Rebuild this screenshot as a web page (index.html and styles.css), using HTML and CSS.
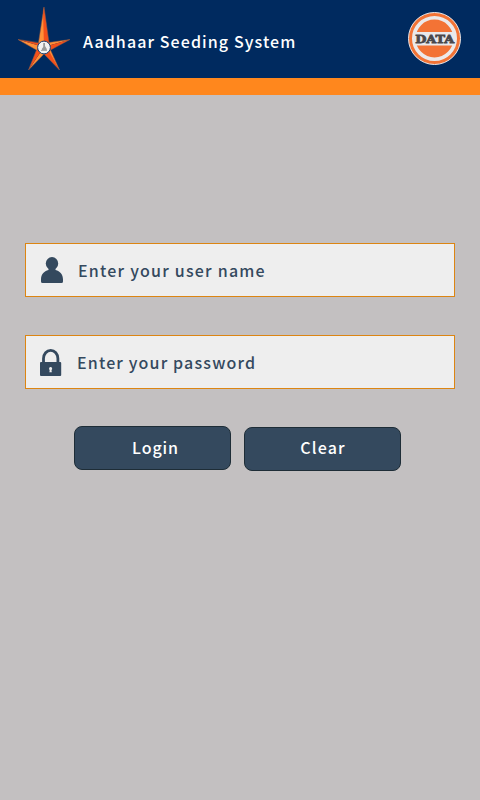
FILE: index.html
```html
<!DOCTYPE html>
<html lang="en">
<head>
<meta charset="utf-8">
<title>Aadhaar Seeding System</title>
<link rel="stylesheet" href="styles.css">
</head>
<body>
<header class="header">
  <svg class="star" viewBox="0 0 56 68" width="56" height="68">
    <g fill="#ff9138">
      <path d="M28 2 22.500 38 28 42z"/>
      <path d="M54 34.500 33 37.500 28 42z"/>
      <path d="M43.500 65 34.500 45 28 42z"/>
      <path d="M12.500 65 28 49 28 42z"/>
      <path d="M2 34.500 20.500 45 28 42z"/>
    </g>
    <g fill="#f4501a">
      <path d="M27 7 28 2 33 38 28 42z"/>
      <path d="M54 34.500 34.500 45 28 42z"/>
      <path d="M43.500 65 28 49 28 42 33 46z"/>
      <path d="M12.500 65 20.500 45 28 42z"/>
      <path d="M2 34.500 22.500 38 28 42z"/>
    </g>
    <path d="M28 2 33 37.500 54 34.500 34.500 45 43.500 65 28 49 12.500 65 20.500 45 2 34.500 22.500 37.500z" fill="none" stroke="#9a5a40" stroke-width=".5"/>
    <circle cx="28" cy="42.500" r="6.400" fill="#f2f2f2" stroke="#173c70" stroke-width="1"/>
    <path d="M27.200 38h1.800v3l1.800 3v2h-5v-2l1.400-2z" fill="#999"/>
    <path d="M25 45.500h6" stroke="#aaa"/>
  </svg>
  <h1 class="title">Aadhaar Seeding System</h1>
  <svg class="logo" viewBox="0 0 54 54" width="54" height="54">
    <circle cx="26.500" cy="26.500" r="26" fill="#f37335" stroke="#e9e7ea" stroke-width="1"/>
    <circle cx="26.500" cy="26.500" r="20.700" fill="none" stroke="#ece9e9" stroke-width="3.600"/>
    <path d="M6 20h41v13.500H6z" fill="#e9e9eb"/>
    <text x="26.700" y="30.600" text-anchor="middle" textLength="39" lengthAdjust="spacingAndGlyphs" class="logo-text">DATA</text>
  </svg>
</header>
<main class="content">
  <form class="form">
    <div class="field">
      <svg class="icon" viewBox="0 0 24 28" width="24" height="28">
        <ellipse cx="12" cy="7.500" rx="6.200" ry="6.400"/>
        <path d="M8.500 10h7v4c4.500 1 7.500 4.500 7.500 9.500v2q0 1.500-1.500 1.500h-19Q1 27 1 25.500v-2C1 18.500 4 15 8.500 14z"/>
      </svg>
      <span class="hint user">Enter your user name</span>
    </div>
    <div class="field">
      <svg class="icon" viewBox="0 0 24 28" width="24" height="28">
        <path d="M3.500 15V10.500a7.200 8.200 0 0 1 14.400 0V15" fill="none" stroke="#34495e" stroke-width="2.800"/>
        <rect x="0" y="14" width="21.200" height="14" rx="1"/>
        <path d="M10.600 19a1.600 1.600 0 0 1 .9 2.900l.3 2.400H9.400l.3-2.400a1.600 1.600 0 0 1 .9-2.900z" fill="#eee"/>
      </svg>
      <span class="hint pass">Enter your password</span>
    </div>
    <div class="actions">
      <button class="button login" type="button">Login</button>
      <button class="button clear" type="button">Clear</button>
    </div>
  </form>
</main>
</body>
</html>
```
FILE: styles.css
```css
* { box-sizing: border-box; }
body {
  margin: 0;
  min-height: 800px;
  background: #c3c0c1;
  font-family: "Noto Sans CJK SC", "Lato", sans-serif;
}
.header {
  display: flex;
  height: 95px;
  background: #002a5f;
  border-bottom: 17px solid #ff871d;
  padding: 5px 18px 0 16px;
}
.star { flex: none; }
.title {
  flex: 1;
  margin: 24px 0 0 11px;
  color: #fff;
  font-size: 16px;
  line-height: 24px;
  font-weight: 500;
  letter-spacing: 1.09px;
  white-space: nowrap;
}
.logo { flex: none; margin-top: 7px; }
.logo-text {
  font: bold 11px "DejaVu Serif", serif;
  fill: #4b484b;
  stroke: #4b484b;
  stroke-width: .8px;
}
.content { padding: 148px 25px 0; }
.field {
  display: flex;
  align-items: center;
  height: 54px;
  margin-bottom: 38px;
  padding-left: 14px;
  background: #eee;
  border: 1px solid #dc8512;
}
.icon { flex: none; fill: #34495e; }
.hint {
  margin-left: 14px;
  color: #34495e;
  font-size: 16px;
  line-height: 24px;
  font-weight: 500;
  letter-spacing: 1.22px;
  white-space: nowrap;
}
.pass { margin-left: 13px; letter-spacing: 1.16px; }
.actions {
  display: flex;
  gap: 13px;
  margin-top: -1px;
  padding-left: 49px;
}
.button {
  width: 157px;
  height: 44px;
  padding: 0 0 2px 6px;
  background: #34495e;
  border: 1px solid #1e2d37;
  border-radius: 8px;
  color: #fff;
  font: 500 16px/24px "Noto Sans CJK SC", "Lato", sans-serif;
  letter-spacing: .9px;
}
.clear { margin-top: 1px; padding: 0 0 4px 1px; letter-spacing: 1.2px; }
```
